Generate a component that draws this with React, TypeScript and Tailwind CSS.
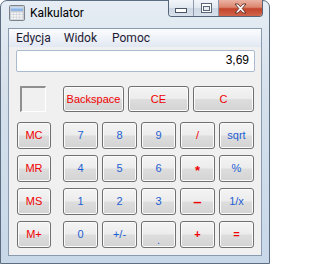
const btnBase =
  "flex items-center justify-center rounded-[3px] border border-[#707070] bg-[linear-gradient(180deg,#f4f4f4_0%,#ececec_48%,#dddddd_52%,#d3d3d3_100%)] shadow-[inset_0_0_0_1px_#fbfbfb] text-[11px] leading-none font-['Liberation_Sans',Arial,sans-serif]";

const RED = "text-[#f00000]";
const BLUE = "text-[#1d5fd2]";

type Key = { label: string; color: string; extra?: string };

const rows: { mem: Key; keys: Key[] }[] = [
  {
    mem: { label: "MC", color: RED },
    keys: [
      { label: "7", color: BLUE },
      { label: "8", color: BLUE },
      { label: "9", color: BLUE },
      { label: "/", color: RED },
      { label: "sqrt", color: BLUE },
    ],
  },
  {
    mem: { label: "MR", color: RED },
    keys: [
      { label: "4", color: BLUE },
      { label: "5", color: BLUE },
      { label: "6", color: BLUE },
      { label: "*", color: RED, extra: "font-bold text-[13px] pt-[3px]" },
      { label: "%", color: BLUE },
    ],
  },
  {
    mem: { label: "MS", color: RED },
    keys: [
      { label: "1", color: BLUE },
      { label: "2", color: BLUE },
      { label: "3", color: BLUE },
      { label: "–", color: RED, extra: "font-bold text-[15px]" },
      { label: "1/x", color: BLUE },
    ],
  },
  {
    mem: { label: "M+", color: RED },
    keys: [
      { label: "0", color: BLUE },
      { label: "+/-", color: BLUE },
      { label: ".", color: BLUE, extra: "pb-[1px] items-end" },
      { label: "+", color: RED, extra: "font-bold text-[10px]" },
      { label: "=", color: RED, extra: "font-bold text-[9px]" },
    ],
  },
];

function CalcIcon() {
  return (
    <svg width="16" height="16" viewBox="0 0 16 16">
      <rect x="0.5" y="0.5" width="15" height="15" rx="1" fill="#c9ccd1" stroke="#7d848d" />
      <rect x="2" y="2" width="12" height="4" fill="#8fb6e6" />
      <rect x="2" y="2" width="12" height="1.5" fill="#c4dcf6" />
      {[7.5, 10, 12.5].map((y) =>
        [2, 5, 8, 11].map((x) => (
          <rect key={`${x}-${y}`} x={x} y={y} width="2.5" height="1.8" fill="#f4f5f7" />
        ))
      )}
    </svg>
  );
}

function CaptionButtons() {
  return (
    <div className="ml-auto mr-[6px] -mt-px flex h-[17px] overflow-hidden rounded-b-[4px] border border-t-0 border-[#55657a]">
      <div className="flex w-[25px] items-end justify-center border-r border-[#8e9aab] bg-[linear-gradient(180deg,#f2f5f9_0%,#e1e8f0_50%,#cdd7e3_52%,#d8e1ec_100%)] pb-[3px]">
        <svg width="12" height="5" viewBox="0 0 12 5">
          <rect x="0.5" y="0.5" width="11" height="4" fill="#fff" stroke="#4a5566" />
        </svg>
      </div>
      <div className="flex w-[25px] items-center justify-center border-r border-[#8e9aab] bg-[linear-gradient(180deg,#f2f5f9_0%,#e1e8f0_50%,#cdd7e3_52%,#d8e1ec_100%)]">
        <svg width="11" height="10" viewBox="0 0 11 10">
          <rect x="0.5" y="0.5" width="10" height="9" fill="#fff" stroke="#5a6677" />
          <rect x="2.5" y="3.5" width="6" height="4" fill="#e8edf3" stroke="#5a6677" />
        </svg>
      </div>
      <div className="flex w-[43px] items-center justify-center bg-[linear-gradient(180deg,#eab3a4_0%,#dc866f_45%,#c4442a_55%,#d0664c_100%)]">
        <svg width="15" height="11" viewBox="0 0 15 11">
          <path
            d="M2 1 L5 1 L7.5 3.8 L10 1 L13 1 L9.2 5.5 L13 10 L10 10 L7.5 7.2 L5 10 L2 10 L5.8 5.5 Z"
            fill="#ffffff"
            stroke="#5b2a22"
            strokeWidth="0.9"
            strokeLinejoin="round"
          />
        </svg>
      </div>
    </div>
  );
}

export default function App() {
  return (
    <div className="h-[264px] w-[270px] bg-white">
      <div className="flex h-full flex-col rounded-t-[7px] border border-[#5d6d81] bg-[linear-gradient(180deg,#e6edf4_0%,#d5e0eb_35%,#c8d8e9_100%)]">
        {/* Title bar */}
        <div className="flex h-[27px] items-start">
          <div className="ml-[8px] mt-[4px]">
            <CalcIcon />
          </div>
          <span className="ml-[5px] mt-[4px] font-['Roboto',sans-serif] text-[12px] leading-[16px] text-black">
            Kalkulator
          </span>
          <CaptionButtons />
        </div>

        {/* Client area */}
        <div className="mx-[7px] mb-[7px] flex flex-1 flex-col border border-[#8a9bb0] bg-[#f0f0f0]">
          {/* Menu */}
          <div className="flex h-[18px] items-center bg-[linear-gradient(180deg,#fbfcfe_0%,#e2e8f2_100%)] font-['Roboto',sans-serif] text-[12px] text-[#1e1a33]">
            <span className="ml-[7px]">Edycja</span>
            <span className="ml-[13px]">Widok</span>
            <span className="ml-[15px]">Pomoc</span>
          </div>

          {/* Display */}
          <div className="ml-[7px] mt-[3px] flex h-[22px] w-[239px] items-center justify-end rounded-[2px] border border-[#a9bad1] bg-white pb-[2px] pr-[5px] font-['Liberation_Sans',Arial,sans-serif] text-[12px] text-black">
            3,69
          </div>

          {/* Top row */}
          <div className="mt-[14px] flex h-[26px]">
            <div className="ml-[11px] h-[26px] w-[26px] border-2 border-b border-r border-t-[#8f8f8f] border-l-[#8f8f8f] border-b-white border-r-white bg-[#f0f0f0]" />
            <div className={`${btnBase} ${RED} ml-[17px] w-[61px]`}>Backspace</div>
            <div className={`${btnBase} ${RED} ml-[4px] w-[61px]`}>CE</div>
            <div className={`${btnBase} ${RED} ml-[4px] w-[61px]`}>C</div>
          </div>

          {/* Keypad */}
          <div className="mt-[10px] flex flex-col gap-[6px]">
            {rows.map((row) => (
              <div key={row.mem.label} className="flex h-[27px]">
                <div className={`${btnBase} ${row.mem.color} ml-[8px] w-[34px]`}>{row.mem.label}</div>
                <div className="ml-[12px] flex gap-[4px]">
                  {row.keys.map((k) => (
                    <div key={k.label} className={`${btnBase} ${k.color} w-[35px] ${k.extra ?? ""}`}>
                      {k.label}
                    </div>
                  ))}
                </div>
              </div>
            ))}
          </div>
        </div>
      </div>
    </div>
  );
}
